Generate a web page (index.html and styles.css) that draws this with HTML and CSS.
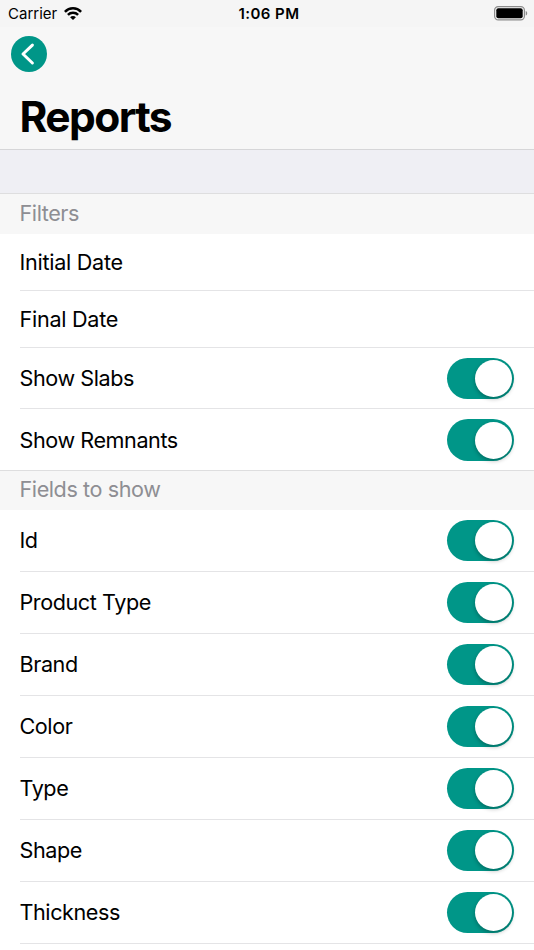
FILE: index.html
```html
<!DOCTYPE html>
<html lang="en">
<head>
<meta charset="utf-8">
<title>Reports</title>
<link rel="stylesheet" href="styles.css">
</head>
<body>
<header class="nav">
  <div class="status">
    <div class="carrier"><span>Carrier</span>
      <svg class="wifi" width="18" height="13" viewBox="0 0 18 13" fill="none" stroke="#000" stroke-width="2.5"><path d="M.9 4.8C5.3.2 12.7.2 17.1 4.8M3.9 7.9c2.8-2.8 7.4-2.8 10.2 0"/><path d="M9 13L6.1 10.2c1.6-1.5 4.2-1.5 5.8 0z" fill="#000" stroke="none"/></svg>
    </div>
    <span class="time">1:06 PM</span>
    <svg class="battery" width="34" height="15" viewBox="0 0 34 15"><rect x=".6" y=".6" width="29.8" height="13.3" rx="3.6" fill="none" stroke="#8c8c8c" stroke-width="1.2"/><rect x="2.3" y="2.3" width="26.4" height="9.9" rx="2"/><path d="M31.7 5v4.6c2-.7 2-3.9 0-4.6z" fill="#8c8c8c"/></svg>
  </div>
  <button class="back" aria-label="Back"><svg width="36" height="36" viewBox="0 0 36 36" fill="none" stroke="#fff" stroke-width="3" stroke-linecap="round" stroke-linejoin="round"><path d="M21.4 9.1L12 18l9.4 9"/></svg></button>
  <h1>Reports</h1>
</header>
<div class="spacer"></div>
<main>
  <section class="filters">
    <h2>Filters</h2>
    <div class="row date"><span>Initial Date</span></div>
    <div class="row date"><span>Final Date</span></div>
    <div class="row"><span>Show Slabs</span><i class="switch"></i></div>
    <div class="row"><span>Show Remnants</span><i class="switch"></i></div>
  </section>
  <section class="fields">
    <h2>Fields to show</h2>
    <div class="row"><span>Id</span><i class="switch"></i></div>
    <div class="row"><span>Product Type</span><i class="switch"></i></div>
    <div class="row"><span>Brand</span><i class="switch"></i></div>
    <div class="row"><span>Color</span><i class="switch"></i></div>
    <div class="row"><span>Type</span><i class="switch"></i></div>
    <div class="row"><span>Shape</span><i class="switch"></i></div>
    <div class="row"><span>Thickness</span><i class="switch"></i></div>
  </section>
</main>
</body>
</html>
```
FILE: styles.css
```css
* { box-sizing: border-box; }
body {
  margin: 0;
  height: 950px;
  background: #fff;
  color: #000;
  font-family: Inter, "Liberation Sans", sans-serif;
}
.nav {
  height: 150px;
  background: #f7f7f7;
  border-bottom: 1px solid #d6d6d8;
}
.status {
  display: grid;
  grid-template-columns: 1fr auto 1fr;
  align-items: center;
  height: 27px;
  padding: 0 6px 0 8px;
  background: #f5f5f5;
  font-size: 15px;
  line-height: 27px;
}
.carrier { display: flex; align-items: center; gap: 7.3px; }
.time { font-weight: 600; letter-spacing: .45px; padding-left: 2px; }
.battery { justify-self: end; }
.back {
  display: block;
  width: 36px;
  height: 36px;
  margin: 9px 0 0 10.6px;
  padding: 0;
  border: 0;
  border-radius: 50%;
  background: #009688;
}
.back svg { display: block; }
h1 {
  margin: 19px 0 0 19.5px;
  font-size: 42.5px;
  line-height: 52px;
  font-weight: 700;
  letter-spacing: -1.6px;
}
.spacer {
  height: 44px;
  background: #efeff4;
  border-bottom: 1px solid #dededf;
}
h2 {
  margin: 0;
  height: 40px;
  padding-left: 19.5px;
  background: #f7f7f7;
  color: #8e8e93;
  font-size: 21.6px;
  line-height: 39px;
  font-weight: 400;
  letter-spacing: -.42px;
}
.fields h2 { border-top: 1px solid #dededf; line-height: 37px; }
.row {
  display: flex;
  align-items: center;
  justify-content: space-between;
  height: 62px;
  margin-left: 20px;
  padding-right: 19.7px;
  border-bottom: 1px solid #e4e4e6;
  font-size: 21.6px;
  line-height: 28px;
  letter-spacing: -.43px;
}
.row span { margin-left: -.5px; }
.fields .row span { margin-bottom: 2px; }
.filters .row { height: 61px; }
.filters .date { height: 57px; letter-spacing: -.28px; }
.filters .row:last-child { border-bottom: 0; }
.filters .switch { margin-top: 1px; }
.switch {
  display: flex;
  justify-content: flex-end;
  width: 67px;
  height: 41.5px;
  padding: 2.3px;
  border-radius: 21px;
  background: #009688;
}
.switch::after {
  content: "";
  width: 37px;
  height: 37px;
  border-radius: 50%;
  background: #fff;
  box-shadow: 0 2px 4px rgba(0, 0, 0, .28);
}
```
